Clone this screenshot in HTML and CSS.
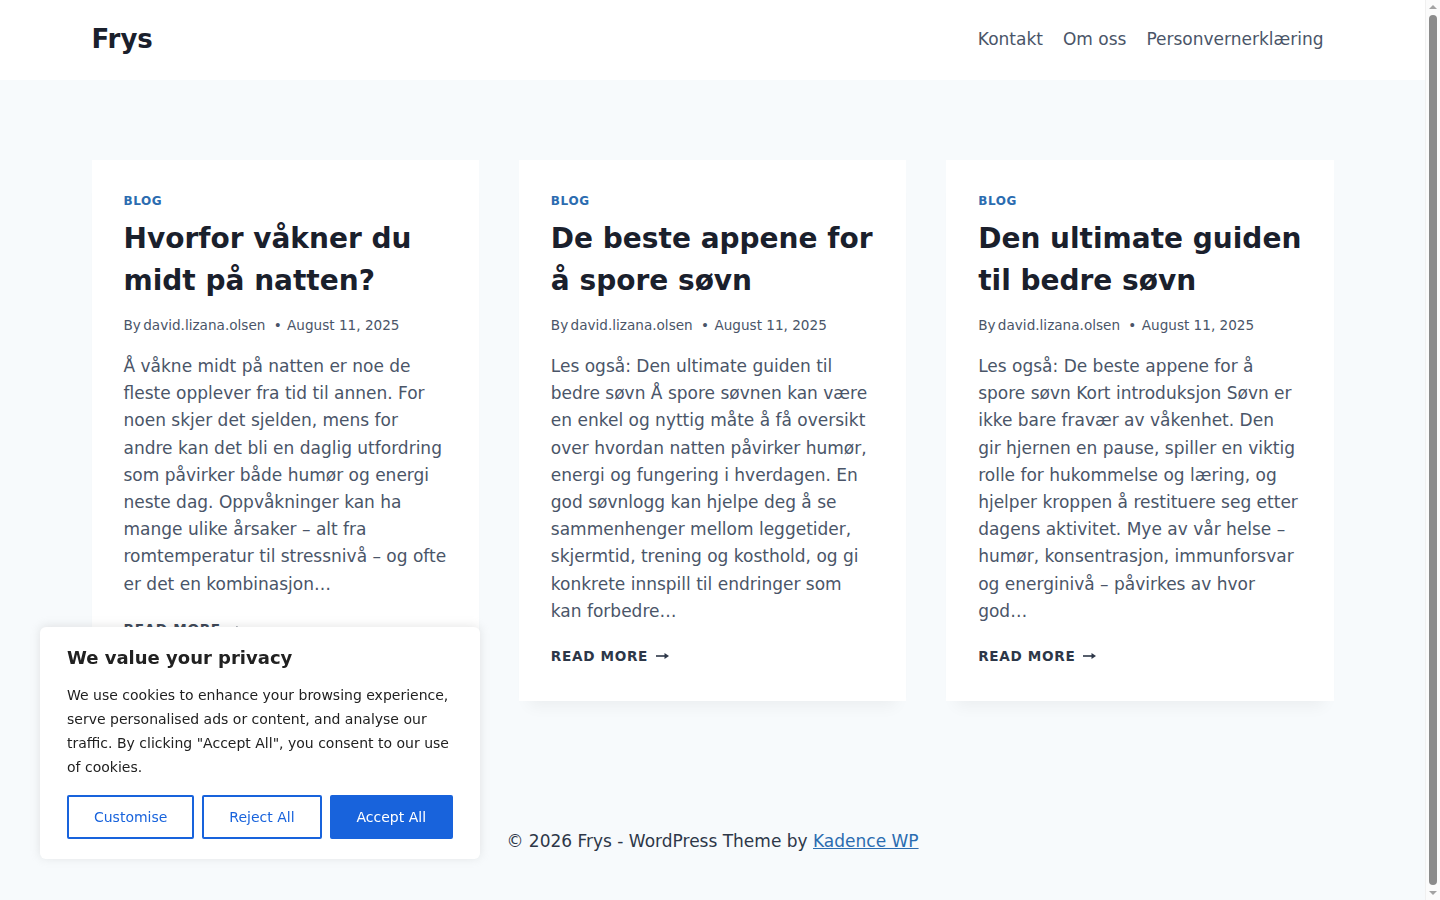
FILE: index.html
```html
<!DOCTYPE html>
<html lang="nb">
<head>
	<meta charset="UTF-8">
	<title>Frys</title>
	<link rel="stylesheet" href="styles.css">
</head>
<body>
	<header class="site-header">
		<div class="container header-row">
			<a href="#" class="site-title">Frys</a>
			<ul class="main-nav">
				<li class="nav-item"><a href="#">Kontakt</a></li>
				<li class="nav-item"><a href="#">Om oss</a></li>
				<li class="nav-item"><a href="#">Personvernerklæring</a></li>
			</ul>
		</div>
	</header>

	<main class="site-main">
		<div class="container post-grid">
			<article class="entry">
				<div class="entry-tax"><a href="#">Blog</a></div>
				<h2 class="entry-title"><a href="#">Hvorfor våkner du midt på natten?</a></h2>
				<div class="entry-meta">
					<span class="by">By</span> <a href="#">david.lizana.olsen</a>
					<span class="sep">•</span>
					<span>August 11, 2025</span>
				</div>
				<p class="entry-summary">Å våkne midt på natten er noe de fleste opplever fra tid til annen. For noen skjer det sjelden, mens for andre kan det bli en daglig utfordring som påvirker både humør og energi neste dag. Oppvåkninger kan ha mange ulike årsaker – alt fra romtemperatur til stressnivå – og ofte er det en kombinasjon…</p>
				<a href="#" class="more-link">Read More <svg class="arr" width="13" height="8" viewBox="0 0 13 8"><path d="M0 4h9.5" stroke="currentColor" stroke-width="1.6"/><path d="M8.5 1L13 4L8.5 7z" fill="currentColor"/></svg></a>
			</article>

			<article class="entry">
				<div class="entry-tax"><a href="#">Blog</a></div>
				<h2 class="entry-title"><a href="#">De beste appene for å spore søvn</a></h2>
				<div class="entry-meta">
					<span class="by">By</span> <a href="#">david.lizana.olsen</a>
					<span class="sep">•</span>
					<span>August 11, 2025</span>
				</div>
				<p class="entry-summary">Les også: Den ultimate guiden til bedre søvn Å spore søvnen kan være en enkel og nyttig måte å få oversikt over hvordan natten påvirker humør, energi og fungering i hverdagen. En god søvnlogg kan hjelpe deg å se sammenhenger mellom leggetider, skjermtid, trening og kosthold, og gi konkrete innspill til endringer som kan forbedre…</p>
				<a href="#" class="more-link">Read More <svg class="arr" width="13" height="8" viewBox="0 0 13 8"><path d="M0 4h9.5" stroke="currentColor" stroke-width="1.6"/><path d="M8.5 1L13 4L8.5 7z" fill="currentColor"/></svg></a>
			</article>

			<article class="entry">
				<div class="entry-tax"><a href="#">Blog</a></div>
				<h2 class="entry-title"><a href="#">Den ultimate guiden til bedre søvn</a></h2>
				<div class="entry-meta">
					<span class="by">By</span> <a href="#">david.lizana.olsen</a>
					<span class="sep">•</span>
					<span>August 11, 2025</span>
				</div>
				<p class="entry-summary">Les også: De beste appene for å spore søvn Kort introduksjon Søvn er ikke bare fravær av våkenhet. Den gir hjernen en pause, spiller en viktig rolle for hukommelse og læring, og hjelper kroppen å restituere seg etter dagens aktivitet. Mye av vår helse – humør, konsentrasjon, immunforsvar og energinivå – påvirkes av hvor god…</p>
				<a href="#" class="more-link">Read More <svg class="arr" width="13" height="8" viewBox="0 0 13 8"><path d="M0 4h9.5" stroke="currentColor" stroke-width="1.6"/><path d="M8.5 1L13 4L8.5 7z" fill="currentColor"/></svg></a>
			</article>
		</div>
	</main>

	<footer class="site-footer">
		<p>© 2026 Frys - WordPress Theme by <a href="#">Kadence WP</a></p>
	</footer>

	<!-- cookie consent -->
	<div class="cky-box">
		<p class="cky-title">We value your privacy</p>
		<p class="cky-text">We use cookies to enhance your browsing experience, serve personalised ads or content, and analyse our traffic. By clicking "Accept All", you consent to our use of cookies.</p>
		<div class="cky-btns">
			<button class="cky-btn">Customise</button>
			<button class="cky-btn">Reject All</button>
			<button class="cky-btn cky-accept">Accept All</button>
		</div>
	</div>

	<!-- window scroll rail -->
	<div class="rail">
		<span class="rail-btn rail-up"></span>
		<span class="rail-thumb"></span>
		<span class="rail-btn rail-down"></span>
	</div>
</body>
</html>
```

FILE: styles.css
```css
*{
	margin: 0;
	padding: 0;
	box-sizing: border-box;
}
body{
	margin-right: 15px;
	font-family: "DejaVu Sans", Verdana, sans-serif;
	font-size: 17px;
	line-height: 1.6;
	color: #4a5568;
	background-color: #f7fafc;
}
ul{
	list-style: none;
}
a{
	color: inherit;
	text-decoration: none;
}
.container{
	max-width: 1290px;
	margin: 0 auto;
	padding: 0 24px;
}

/* header */
.site-header{
	background-color: #fff;
}
.header-row{
	display: flex;
	align-items: center;
	justify-content: space-between;
	height: 80px;
}
.site-title{
	font-size: 26px;
	font-weight: 700;
	line-height: 1.2;
	color: #1a202c;
}
.main-nav{
	display: flex;
}
.nav-item a{
	display: block;
	padding: 10px;
	color: #4a5568;
}

/* posts */
.site-main{
	padding: 80px 0;
}
.post-grid{
	display: grid;
	grid-template-columns: repeat(3, 1fr);
	gap: 40px;
}
.entry{
	background-color: #fff;
	padding: 32px;
	box-shadow: 0 15px 15px -10px rgba(0,0,0,.05);
}
.entry-tax{
	padding-top: 1px;
	font-size: 12px;
	line-height: 16px;
	font-weight: 700;
	letter-spacing: .05em;
	text-transform: uppercase;
	color: #2b6cb0;
	margin-bottom: 9px;
}
.entry-title{
	font-size: 28px;
	line-height: 42px;
	font-weight: 700;
	color: #1a202c;
}
.entry-meta{
	font-size: 13.6px;
	line-height: 22px;
	margin-top: 12px;
	color: #4a5568;
}
.entry-meta .by{
	margin-right: -2px;
}
.entry-meta .sep{
	margin: 0 1px 0 4px;
}
.entry-summary{
	margin-top: 17px;
	line-height: 27.2px;
}
.more-link{
	display: inline-block;
	margin-top: 20px;
	font-size: 13.6px;
	line-height: 22px;
	font-weight: 700;
	letter-spacing: .05em;
	text-transform: uppercase;
	color: #2d3748;
}
.more-link .arr{
	margin-left: 2px;
	vertical-align: 1px;
}

/* footer */
.site-footer{
	padding: 47px 0 63px;
	text-align: center;
	color: #2d3748;
	line-height: 27px;
}
.site-footer a{
	color: #2b6cb0;
	text-decoration: underline;
}

/* cookie box */
.cky-box{
	position: fixed;
	left: 40px;
	bottom: 41px;
	width: 440px;
	padding: 19px 27px 20px;
	background-color: #fff;
	border-radius: 6px;
	box-shadow: 0 -1px 10px 0 rgba(172,171,171,.3);
	color: #212121;
}
.cky-title{
	font-size: 18px;
	line-height: 24px;
	font-weight: 700;
	margin-bottom: 13px;
}
.cky-text{
	font-size: 14px;
	line-height: 24px;
}
.cky-btns{
	display: flex;
	gap: 8px;
	margin-top: 16px;
}
.cky-btn{
	flex: auto;
	font-family: inherit;
	font-size: 14px;
	line-height: 24px;
	padding: 8px 10px;
	border: 2px solid #1863dc;
	border-radius: 2px;
	background-color: transparent;
	color: #1863dc;
	cursor: pointer;
}
.cky-btn.cky-accept{
	background-color: #1863dc;
	color: #fff;
}

/* scroll rail on the right edge */
.rail{
	position: fixed;
	top: 0;
	right: 0;
	width: 15px;
	height: 100%;
	display: flex;
	flex-direction: column;
	align-items: center;
	background-color: #fbfbfb;
	border-left: 1px solid #f0f0f0;
}
.rail-btn{
	display: block;
	height: 0;
	width: 0;
	border-left: 4px solid transparent;
	border-right: 4px solid transparent;
}
.rail-up{
	border-bottom: 4px solid #a3a3a3;
	margin: 5px 0 6px;
}
.rail-down{
	border-top: 4px solid #a3a3a3;
	margin: 6px 0 5px;
}
.rail-thumb{
	flex: 1;
	width: 8px;
	background-color: #8b8b8b;
	border-radius: 4px;
}
```
